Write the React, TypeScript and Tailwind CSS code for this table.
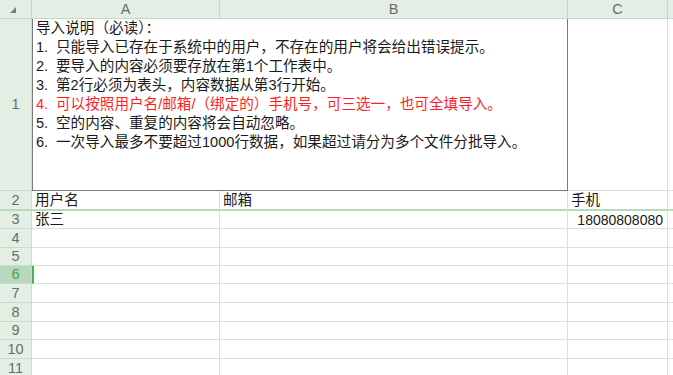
const FONT = "font-['Liberation_Sans','Noto_Sans_CJK_SC',sans-serif]";

const notes = [
  { n: '1.', t: '只能导入已存在于系统中的用户，不存在的用户将会给出错误提示。' },
  { n: '2.', t: '要导入的内容必须要存放在第1个工作表中。' },
  { n: '3.', t: '第2行必须为表头，内容数据从第3行开始。' },
  { n: '4.', t: '可以按照用户名/邮箱/（绑定的）手机号，可三选一，也可全填导入。', red: true },
  { n: '5.', t: '空的内容、重复的内容将会自动忽略。' },
  { n: '6.', t: '一次导入最多不要超过1000行数据，如果超过请分为多个文件分批导入。' },
];

const emptyRows = [4, 5, 6, 7, 8, 9, 10, 11];

function RowHead({ n, sel, thick }: { n: number; sel?: boolean; thick?: boolean }) {
  return (
    <div
      className={`flex items-center justify-center border-r border-[#c9dccb] text-[14.5px] leading-none ${
        thick ? 'border-b-2 border-b-[#b7dbba]' : 'border-b'
      } ${sel ? 'bg-[#b8d7bc] text-[#3da84a]' : 'bg-[#e3efe4] text-[#6b6b6b]'}`}
    >
      {n}
    </div>
  );
}

export default function App() {
  return (
    <div className={`w-[673px] h-[375px] overflow-hidden bg-white ${FONT} text-[14.6px] text-[#1a1a1a]`}>
      <div className="grid grid-cols-[32px_188px_348px_100px_1fr] grid-rows-[19px_172px_20px_18px_19px_18px_18px_19px_19px_18px_19px_19px]">
        {/* column headers */}
        <div className="bg-[#e3efe4] border-r border-b border-[#c3d9c6] flex items-end justify-center pb-[4px]">
          <svg width="8" height="8" viewBox="0 0 8 8" className="mr-[3px] ml-[-3px]">
            <polygon points="7,1 7,7 1,7" fill="#7d7d7d" />
          </svg>
        </div>
        {['A', 'B', 'C', ''].map((c, i) => (
          <div
            key={i}
            className={`bg-[#e3efe4] border-b border-[#c3d9c6] flex items-center justify-center text-[14.5px] leading-none text-[#6b6b6b] ${
              i < 3 ? 'border-r' : ''
            }`}
          >
            {c}
          </div>
        ))}

        {/* row 1: merged instructions */}
        <RowHead n={1} />
        <div className="col-span-2 border border-t-0 border-[#7a7a7a] pl-[3px] leading-[19px] overflow-hidden">
          <div>导入说明（必读）：</div>
          {notes.map((l) => (
            <div key={l.n} className={`flex ${l.red ? 'text-[#ff1f1f]' : ''}`}>
              <span className="w-[20px] shrink-0">{l.n}</span>
              <span>{l.t}</span>
            </div>
          ))}
        </div>
        <div className="border-r border-b border-[#d3e6d5]" />
        <div className="border-b border-[#d3e6d5]" />

        {/* row 2: table head */}
        <RowHead n={2} thick />
        <div className="border-r border-[#d3e6d5] border-b-2 border-b-[#b7dbba] pl-[3px] leading-[19px]">用户名</div>
        <div className="border-r border-[#d3e6d5] border-b-2 border-b-[#b7dbba] pl-[3px] leading-[19px]">邮箱</div>
        <div className="border-r border-[#d3e6d5] border-b-2 border-b-[#b7dbba] pl-[3px] leading-[19px]">手机</div>
        <div className="border-b-2 border-b-[#b7dbba]" />

        {/* row 3 */}
        <RowHead n={3} />
        <div className="border-r border-b border-[#d3e6d5] pl-[3px] leading-[17px]">张三</div>
        <div className="border-r border-b border-[#d3e6d5]" />
        <div className="border-r border-b border-[#d3e6d5] pr-[4px] text-right leading-[18px] text-[14px]">18080808080</div>
        <div className="border-b border-[#d3e6d5]" />

        {/* empty rows */}
        {emptyRows.map((n) => (
          <div key={n} className="contents">
            <RowHead n={n} sel={n === 6} />
            <div
              className={`border-r border-b border-[#d3e6d5] ${n === 6 ? 'border-l-2 border-l-[#4caf50]' : ''}`}
            />
            <div className="border-r border-b border-[#d3e6d5]" />
            <div className="border-r border-b border-[#d3e6d5]" />
            <div className="border-b border-[#d3e6d5]" />
          </div>
        ))}
      </div>
    </div>
  );
}
